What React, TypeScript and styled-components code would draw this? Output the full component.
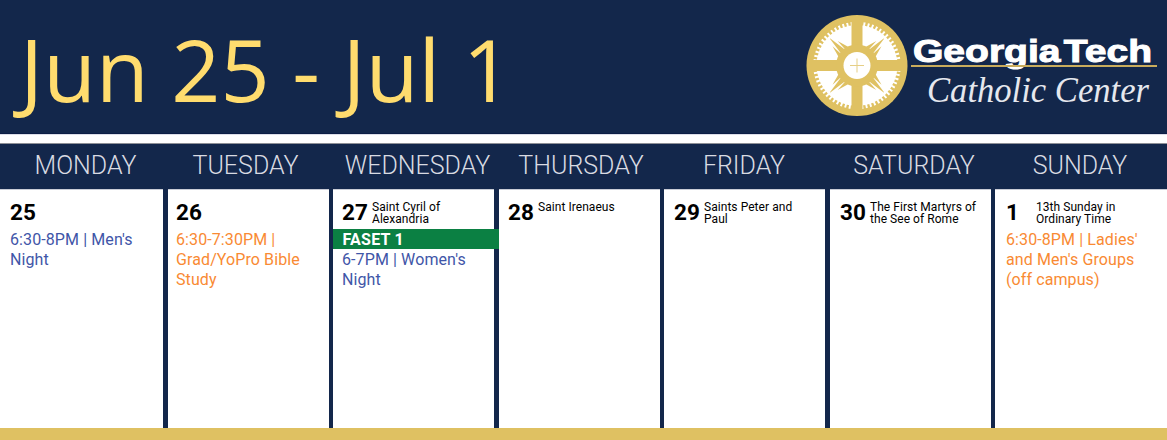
import React from "react";
import styled, { createGlobalStyle } from "styled-components";

const Global = createGlobalStyle`
  html, body { margin: 0; padding: 0; background: #fff; overflow: hidden; }
  * { box-sizing: border-box; }
`;

const Page = styled.div`
  width: 1167px;
  height: 440px;
  display: flex;
  flex-direction: column;
  font-family: Roboto, sans-serif;
  overflow: hidden;
`;
const Banner = styled.header`
  height: 134px;
  background: #13274b;
  display: flex;
  justify-content: space-between;
  border-bottom: 1px solid #0c1d45;
`;
const Title = styled.h1`
  margin: 0;
  padding: 11px 0 0 20px;
  font-family: "Open Sans", sans-serif;
  font-weight: 400;
  font-size: 86px;
  line-height: 116px;
  letter-spacing: 0.1px;
  color: #ffdc6e;
  white-space: nowrap;
`;
const Logo = styled.svg`
  width: 377px;
  height: 133px;
  flex: none;
  display: block;
`;
const Spacer = styled.div`
  height: 9px;
  background: #fff;
  border-top: 1px solid #dcdee8;
`;
const Calendar = styled.div`
  flex: 1;
  display: grid;
  grid-template-columns: 163px 161px 161px 161px 161px 161px 172px;
  grid-template-rows: 45px 1fr;
  column-gap: 4.5px;
  background: #13274b;
  border-top: 1px solid #8d8f96;
  min-height: 0;
`;
const DayName = styled.div<{ $shift: number }>`
  font-weight: 300;
  font-size: 25px;
  line-height: 44px;
  color: #d9dbe2;
  text-align: center;
  white-space: nowrap;
  text-indent: ${(p) => p.$shift * 2}px;
`;
const Cell = styled.div<{ $inset: number }>`
  background: #fff;
  padding: 11px 0 0 ${(p) => p.$inset}px;
  position: relative;
  border-top: 1px solid #c9ccd6;
`;
const CellHead = styled.div`
  display: grid;
  grid-template-columns: 30px 1fr;
  height: 29px;
  padding-right: 14px;
`;
const Num = styled.span`
  font-weight: 700;
  font-size: 22.5px;
  line-height: 22px;
  color: #000;
`;
const Feast = styled.span`
  font-size: 12px;
  line-height: 12px;
  letter-spacing: 0.05px;
  color: #000;
`;
const Event = styled.div<{ $tone: "blue" | "orange" }>`
  font-size: 16px;
  line-height: 20px;
  letter-spacing: 0.1px;
  color: ${(p) => (p.$tone === "blue" ? "#3f56a8" : "#f98a33")};
  padding-right: 8px;
`;
const Banded = styled.div`
  margin: -1px -5px 1px -9.5px;
  padding-left: 10px;
  height: 20px;
  background: #0b8043;
  color: #fff;
  font-weight: 700;
  font-size: 16px;
  line-height: 21px;
  letter-spacing: 0.25px;
  position: relative;
`;
const Footer = styled.div`
  height: 12px;
  background: #dfc162;
  flex: none;
`;

type Ev = { tone: "blue" | "orange"; text: string };
const days: { name: string; shift: number; inset: number; num: string; feast?: string; band?: string; events: Ev[] }[] = [
  { name: "MONDAY", shift: 4, inset: 10, num: "25", events: [{ tone: "blue", text: "6:30-8PM | Men's Night" }] },
  { name: "TUESDAY", shift: -2.5, inset: 8.5, num: "26", events: [{ tone: "orange", text: "6:30-7:30PM | Grad/YoPro Bible Study" }] },
  { name: "WEDNESDAY", shift: 4, inset: 9, num: "27", feast: "Saint Cyril of Alexandria", band: "FASET 1", events: [{ tone: "blue", text: "6-7PM | Women's Night" }] },
  { name: "THURSDAY", shift: 2, inset: 9.5, num: "28", feast: "Saint Irenaeus", events: [] },
  { name: "FRIDAY", shift: -0.5, inset: 10, num: "29", feast: "Saints Peter and Paul", events: [] },
  { name: "SATURDAY", shift: 4, inset: 10.5, num: "30", feast: "The First Martyrs of the See of Rome", events: [] },
  { name: "SUNDAY", shift: -1, inset: 11, num: "1", feast: "13th Sunday in Ordinary Time", events: [{ tone: "orange", text: "6:30-8PM | Ladies' and Men's Groups (off campus)" }] },
];

const CX = 67, CY = 65.5;
const GOLD = "#dfc162";
const Wheel = () => {
  const spikes = [45, 135, 225, 315];
  return (
    <g>
      <circle cx={CX} cy={CY} r={50.5} fill={GOLD} />
      <circle cx={CX} cy={CY} r={41.5} fill="none" stroke="#fff" strokeWidth={4.5} strokeDasharray="1.9 2.3" />
      <circle cx={CX} cy={CY} r={40.5} fill="#fff" />
      <rect x={CX - 46} y={CY - 5.5} width={92} height={11} fill={GOLD} />
      <rect x={CX - 5.5} y={CY - 46} width={11} height={92} fill={GOLD} />
      {spikes.map((a) => (
        <g key={a} transform={`rotate(${a} ${CX} ${CY})`}>
          <polygon points={`${CX - 3},${CY - 18} ${CX + 3},${CY - 18} ${CX + 0.3},${CY - 38} ${CX - 0.3},${CY - 38}`} fill={GOLD} />
          <polygon points={`${CX - 7},${CY - 19} ${CX - 3},${CY - 19} ${CX - 3.6},${CY - 31}`} fill={GOLD} />
          <polygon points={`${CX + 7},${CY - 19} ${CX + 3},${CY - 19} ${CX + 3.6},${CY - 31}`} fill={GOLD} />
        </g>
      ))}
      <circle cx={CX} cy={CY} r={21} fill={GOLD} />
      <circle cx={CX} cy={CY} r={13.5} fill="#fff" />
      <rect x={CX - 0.5} y={CY - 7} width={1} height={14} fill="#e6cf86" />
      <rect x={CX - 7} y={CY - 0.5} width={14} height={1} fill="#e6cf86" />
    </g>
  );
};

export default function App() {
  return (
    <Page>
      <Global />
      <Banner>
        <Title>Jun 25 - Jul 1</Title>
        <Logo viewBox="0 0 377 133">
          <Wheel />
          <text x={123} y={62} fontFamily="'Liberation Sans', sans-serif" fontWeight={700} fontSize={31} fill="#fff" stroke="#fff" strokeWidth={1} wordSpacing={-6} textLength={239} lengthAdjust="spacingAndGlyphs">
            Georgia Tech
          </text>
          <rect x={121} y={65} width={246} height={2} fill="#c9ac5c" />
          <text x={137} y={102} fontFamily="'Liberation Serif', serif" fontStyle="italic" fontSize={36} fill="#e6e8ee" textLength={222} lengthAdjust="spacingAndGlyphs">
            Catholic Center
          </text>
        </Logo>
      </Banner>
      <Spacer />
      <Calendar>
        {days.map((d) => (
          <DayName key={d.name} $shift={d.shift}>{d.name}</DayName>
        ))}
        {days.map((d) => (
          <Cell key={d.name} $inset={d.inset}>
            <CellHead>
              <Num>{d.num}</Num>
              <Feast>{d.feast}</Feast>
            </CellHead>
            {d.band && <Banded>{d.band}</Banded>}
            {d.events.map((e) => (
              <Event key={e.text} $tone={e.tone}>{e.text}</Event>
            ))}
          </Cell>
        ))}
      </Calendar>
      <Footer />
    </Page>
  );
}
